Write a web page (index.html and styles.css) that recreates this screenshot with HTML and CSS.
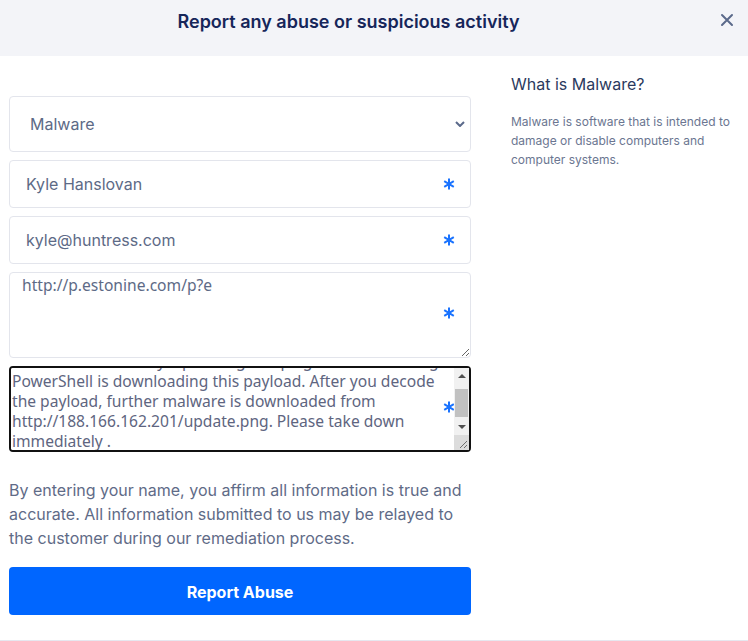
FILE: index.html
```html
<!DOCTYPE html>
<html lang="en">

<head>
    <title>Report abuse</title>
    <link rel="stylesheet" href="styles.css">
</head>

<body>
    <div class="modal">
        <header class="modal-head">
            <h1>Report any abuse or suspicious activity</h1>
            <button type="button" class="close" aria-label="Close">
                <svg width="14" height="14" viewBox="0 0 14 14"><path d="M2 2L12 12M12 2L2 12" stroke="currentColor" stroke-width="2" stroke-linecap="round"/></svg>
            </button>
        </header>

        <div class="modal-body">
            <form class="report">
                <div class="field">
                    <select name="kind" class="control select">
                        <option>Malware</option>
                        <option>Phishing</option>
                        <option>Spam</option>
                    </select>
                    <svg class="chevron" width="10" height="6" viewBox="0 0 10 6"><path d="M1 1L5 5L9 1" fill="none" stroke="currentColor" stroke-width="2"/></svg>
                </div>
                <div class="field">
                    <input class="control input" name="name" type="text" value="Kyle Hanslovan" />
                    <svg class="required" width="12" height="12" viewBox="0 0 12 12"><path d="M6 0.5V11.5M1.2 3.2L10.8 8.8M10.8 3.2L1.2 8.8" stroke="currentColor" stroke-width="2"/></svg>
                </div>
                <div class="field">
                    <input class="control input" name="email" type="email" value="kyle@huntress.com" />
                    <svg class="required" width="12" height="12" viewBox="0 0 12 12"><path d="M6 0.5V11.5M1.2 3.2L10.8 8.8M10.8 3.2L1.2 8.8" stroke="currentColor" stroke-width="2"/></svg>
                </div>
                <div class="field field-area">
                    <textarea class="control area" name="url" rows="4">http://p.estonine.com/p?e</textarea>
                    <svg class="required" width="12" height="12" viewBox="0 0 12 12"><path d="M6 0.5V11.5M1.2 3.2L10.8 8.8M10.8 3.2L1.2 8.8" stroke="currentColor" stroke-width="2"/></svg>
                </div>
                <div class="field field-area">
                    <textarea class="control area focused" name="details" id="details" rows="4">Found this hosted by a phishing campaign we are tracking.
PowerShell is downloading this payload. After you decode the payload, further malware is downloaded from http://188.166.162.201/update.png. Please take down immediately .</textarea>
                    <svg class="required" width="12" height="12" viewBox="0 0 12 12"><path d="M6 0.5V11.5M1.2 3.2L10.8 8.8M10.8 3.2L1.2 8.8" stroke="currentColor" stroke-width="2"/></svg>
                    <div class="scrollbar" aria-hidden="true">
                        <span class="sb-btn sb-up"></span>
                        <span class="sb-track"><span class="sb-thumb"></span></span>
                        <span class="sb-btn sb-down"></span>
                        <span class="sb-corner">
                            <svg width="15" height="15" viewBox="0 0 15 15"><path d="M13 6L6 13M13 10L10 13" stroke="#6e6e6e" stroke-width="1"/></svg>
                        </span>
                    </div>
                </div>

                <p class="affirm">By entering your name, you affirm all information is true and accurate. All information submitted to us may be relayed to the customer during our remediation process.</p>

                <button type="submit" class="submit">Report Abuse</button>
            </form>

            <aside class="help">
                <h2>What is Malware?</h2>
                <p>Malware is software that is intended to damage or disable computers and computer systems.</p>
            </aside>
        </div>
    </div>
    <script src="script.js"></script>
</body>

</html>
```

FILE: styles.css
```css
:root {
    font-family: Inter, "Noto Sans", sans-serif;
}

body {
    margin: 0;
    background: white;
}

.modal {
    height: 641px;
    box-sizing: border-box;
    border-bottom: 1px solid #e6e7ef;
}

.modal-head {
    height: 56px;
    box-sizing: border-box;
    background: #f3f4f8;
    display: flex;
    align-items: center;
    justify-content: center;
    padding: 0 51px 14px 0;
    position: relative;
}

.modal-head h1 {
    margin: 0;
    font-size: 18px;
    font-weight: 600;
    color: #16265a;
}

.close {
    position: absolute;
    right: 14px;
    top: 13px;
    border: 0;
    background: none;
    padding: 0;
    width: 14px;
    height: 14px;
    color: #5b6a8b;
    display: flex;
}

.modal-body {
    display: flex;
    padding-left: 9px;
}

.report {
    width: 462px;
    padding-top: 40px;
    display: flex;
    flex-direction: column;
    gap: 8px;
}

.field {
    position: relative;
    display: flex;
}

.control {
    flex: 1;
    box-sizing: border-box;
    border: 1px solid #e3e5ec;
    border-radius: 4px;
    background: white;
    color: #5d6a86;
    font-family: Inter, sans-serif;
    font-size: 16px;
    margin: 0;
    outline: none;
}

.select {
    height: 56px;
    appearance: none;
    padding: 0 20px;
}

.input {
    height: 48px;
    padding: 0 16px;
}

.area {
    height: 86px;
    font-family: "Noto Sans", sans-serif;
    font-size: 15.6px;
    line-height: 20px;
    padding: 2px 12px;
    resize: vertical;
}

.area.focused {
    border: 2px solid #111;
    padding: 0 16px 0 1px;
    color: #5e6580;
}

/* drawn scrollbar: the headless browser hides native ones */
.scrollbar {
    position: absolute;
    top: 2px;
    right: 2px;
    bottom: 2px;
    width: 15px;
    display: flex;
    flex-direction: column;
    background: #f1f1f1;
}

.sb-btn {
    height: 16px;
    display: flex;
    align-items: center;
    justify-content: center;
}

.sb-up::before,
.sb-down::before {
    content: "";
    border-left: 4px solid transparent;
    border-right: 4px solid transparent;
}

.sb-up::before {
    border-bottom: 4px solid #505050;
}

.sb-down::before {
    border-top: 4px solid #505050;
}

.sb-track {
    flex: 1;
    padding: 5px 1px 2px;
    display: flex;
}

.sb-thumb {
    flex: 1;
    background: #c1c1c1;
}

.sb-corner {
    height: 15px;
    background: #dcdcdc;
    display: flex;
}

.chevron {
    position: absolute;
    right: 6px;
    top: 25px;
    color: #5b6a8b;
}

.required {
    position: absolute;
    right: 16px;
    top: calc(50% - 6px);
    color: #1a73ff;
}

.field-area .required {
    top: calc(50% - 8px);
}

.affirm {
    margin: 18px 0 0;
    font-size: 16px;
    line-height: 24px;
    color: #5f6b87;
}

.submit {
    margin-top: 9px;
    height: 48px;
    border: 0;
    border-radius: 4px;
    background: #0066ff;
    color: white;
    font-family: Inter, sans-serif;
    font-size: 16px;
    font-weight: 700;
    padding-top: 2px;
}

.help {
    margin-left: 40px;
    padding-top: 16px;
    width: 230px;
}

.help h2 {
    margin: 0;
    font-size: 16px;
    font-weight: 400;
    line-height: 24px;
    color: #2b3a5e;
}

.help p {
    margin: 16px 0 0;
    font-size: 12px;
    line-height: 19px;
    color: #6b7691;
}
```

FILE: script.js
```js
const details = document.getElementById("details");
details.scrollTop = details.scrollHeight - details.clientHeight - 2;
```
